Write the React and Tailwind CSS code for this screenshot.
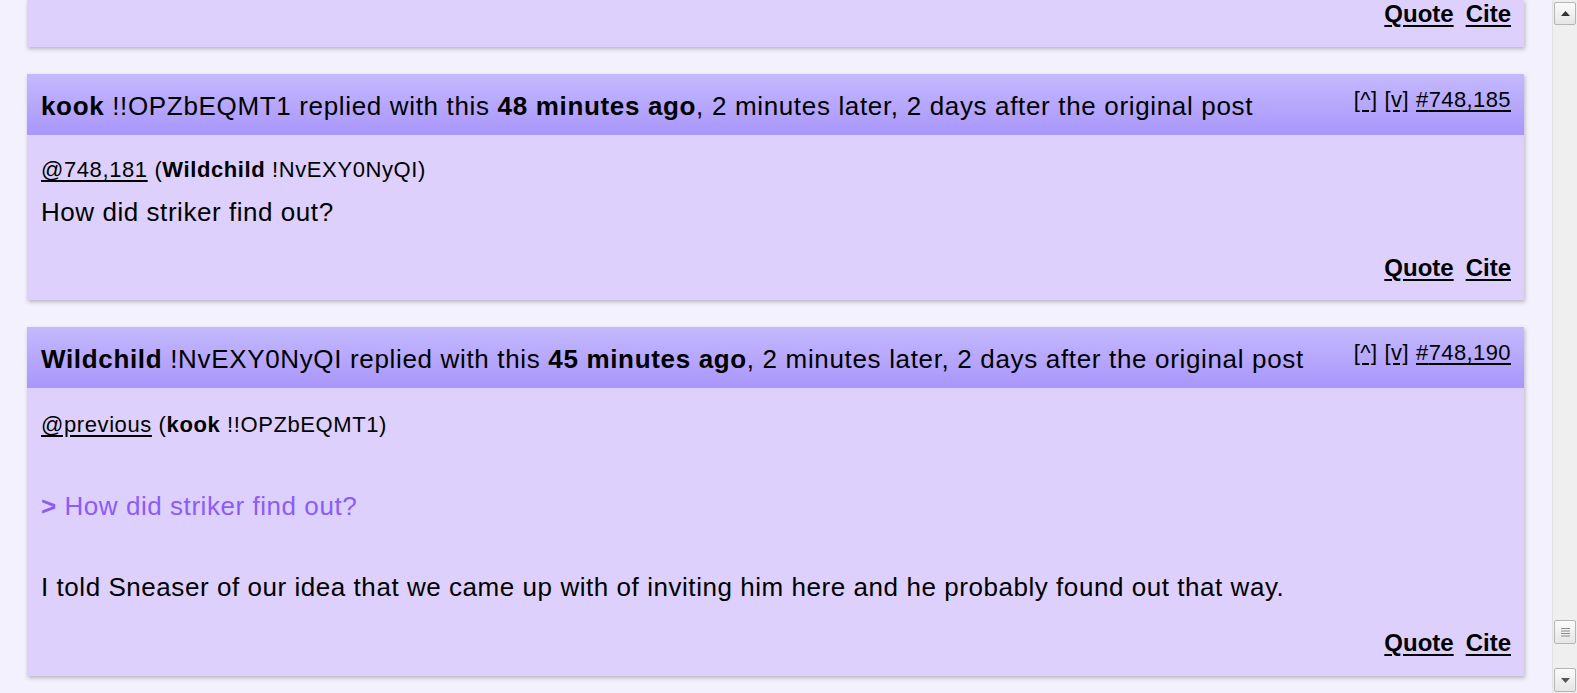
import React from "react";

const posts = [
  {
    id: "748,185",
    name: "kook",
    trip: "!!OPZbEQMT1",
    ago: "48 minutes ago",
    ref: "@748,181",
    refName: "Wildchild",
    refTrip: "!NvEXY0NyQI",
    lines: [{ text: "How did striker find out?" }],
  },
  {
    id: "748,190",
    name: "Wildchild",
    trip: "!NvEXY0NyQI",
    ago: "45 minutes ago",
    ref: "@previous",
    refName: "kook",
    refTrip: "!!OPZbEQMT1",
    lines: [
      { text: "How did striker find out?", quote: true },
      {
        text: "I told Sneaser of our idea that we came up with of inviting him here and he probably found out that way.",
      },
    ],
  },
];

const PostActions = () => (
  <div className="flex justify-end gap-[12px] text-[24px] leading-[24px] font-bold text-black">
    <a href="#" className="underline underline-offset-[3px]">
      Quote
    </a>
    <a href="#" className="underline underline-offset-[3px]">
      Cite
    </a>
  </div>
);

const Post = ({ post }) => {
  const long = post.lines.length > 1;
  return (
    <div className="mt-[27px] bg-[#ddd0fd] shadow-[1px_2px_4px_rgba(0,0,0,0.25)]">
      <div className="h-[61px] flex items-center justify-between pl-[14px] pr-[13px] bg-gradient-to-b from-[#c5b9fe] to-[#a996fb]">
        <h3 className="text-[26px] leading-[28px] tracking-[0.66px] text-black font-normal pt-[2px] whitespace-nowrap">
          <strong className="font-bold">{post.name}</strong> {post.trip} replied
          with this <strong className="font-bold">{post.ago}</strong>, 2
          minutes later, 2 days after the original post
        </h3>
        <div className="flex gap-[7px] text-[22px] leading-[24px] tracking-[0.4px] self-start mt-[14px]">
          <a href="#" className="underline underline-offset-[3px]">[^]</a>
          <a href="#" className="underline underline-offset-[3px]">[v]</a>
          <a href="#" className="underline underline-offset-[3px]">#{post.id}</a>
        </div>
      </div>
      <div
        className={`pl-[14px] pr-[13px] text-black ${
          long ? "pt-[25px] pb-[21px]" : "pt-[23px] pb-[20px]"
        }`}
      >
        <p className="text-[22px] leading-[24px] tracking-[0.6px]">
          <a href="#" className="underline underline-offset-[3px]">
            {post.ref}
          </a>{" "}
          (<strong className="font-bold">{post.refName}</strong> {post.refTrip})
        </p>
        {post.lines.map((line, i) =>
          line.quote ? (
            <p
              key={i}
              className="mt-[55px] text-[26px] leading-[28px] tracking-[0.55px] text-[#8b5cf6]"
            >
              <span className="font-bold">&gt;</span> {line.text}
            </p>
          ) : (
            <p
              key={i}
              className={`${
                long ? "mt-[53px]" : "mt-[16px]"
              } text-[26px] leading-[28px] tracking-[0.55px]`}
            >
              {line.text}
            </p>
          )
        )}
        <div className="mt-[30px]">
          <PostActions />
        </div>
      </div>
    </div>
  );
};

const Scrollbar = () => (
  <div className="w-[25px] h-full flex flex-col bg-[#efefef] border-l border-[#e2e2e2]">
    <div className="mt-[2px] mx-[1px] h-[23px] flex items-center justify-center bg-gradient-to-b from-[#fbfbfb] to-[#e6e6e6] border border-[#b5b5b5] rounded-[2px]">
      <svg width="9" height="5" viewBox="0 0 9 5">
        <path d="M4.5 0 L9 5 L0 5 Z" fill="#333" />
      </svg>
    </div>
    <div className="flex-1" />
    <div className="mx-[1px] h-[24px] flex items-center justify-center bg-gradient-to-b from-[#fbfbfb] to-[#e6e6e6] border border-[#b5b5b5] rounded-[2px]">
      <svg width="11" height="11" viewBox="0 0 11 11">
        <path d="M1 1.5h9M1 4h9M1 6.5h9M1 9h9" stroke="#8a8a8a" strokeWidth="1" />
      </svg>
    </div>
    <div className="h-[24px]" />
    <div className="mx-[1px] mb-[1px] h-[24px] flex items-center justify-center bg-gradient-to-b from-[#fbfbfb] to-[#e6e6e6] border border-[#b5b5b5] rounded-[2px]">
      <svg width="9" height="5" viewBox="0 0 9 5">
        <path d="M0 0 L9 0 L4.5 5 Z" fill="#555" />
      </svg>
    </div>
  </div>
);

export default function App() {
  return (
    <div
      className="flex h-[693px] w-full overflow-hidden bg-[#f4f1fe]"
      style={{ fontFamily: '"Liberation Sans", Arial, sans-serif' }}
    >
      <main className="flex-1 min-w-0 pl-[27px] pr-[28px]">
        <div className="bg-[#ddd0fd] pl-[14px] pr-[13px] pt-[2px] pb-[21px] shadow-[1px_2px_4px_rgba(0,0,0,0.25)]">
          <PostActions />
        </div>
        {posts.map((post) => (
          <Post key={post.id} post={post} />
        ))}
      </main>
      <Scrollbar />
    </div>
  );
}
